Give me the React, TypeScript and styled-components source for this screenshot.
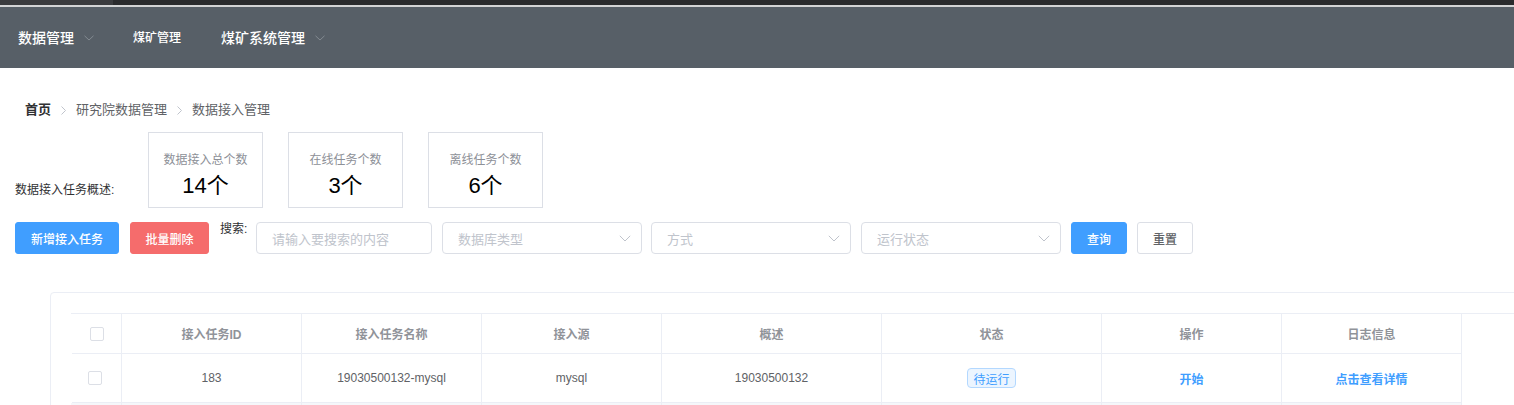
import React from "react";
import styled, { createGlobalStyle } from "styled-components";

const FONT = `"Helvetica Neue", Helvetica, "PingFang SC", "Liberation Sans", "Noto Sans CJK SC", sans-serif`;

const GlobalStyle = createGlobalStyle`
  html, body { margin: 0; padding: 0; overflow: hidden; background: #fff; }
  body { font-family: ${FONT}; color: #606266; }
  * { box-sizing: border-box; }
`;

const Page = styled.div`
  width: 1514px;
  height: 405px;
  overflow: hidden;
`;

const TopStrip = styled.div`
  display: flex;
  height: 5px;
  background: #2a2b2d;
`;

const TopTab = styled.div`
  width: 113px;
  background: #3a3b3e;
`;

const TopLine = styled.div`
  height: 2px;
  background: #d3d4d5;
`;

const NavBar = styled.nav`
  height: 61px;
  background: #575f67;
  display: flex;
  align-items: center;
  padding-left: 18px;
  gap: 40px;
`;

const NavItem = styled.div<{ $small?: boolean }>`
  display: flex;
  align-items: center;
  gap: 10px;
  color: #fff;
  font-size: ${(p) => (p.$small ? "12px" : "14px")};
  font-weight: 500;
  line-height: 20px;
  margin-left: ${(p) => (p.$small ? "-1px" : "0")};
`;

const NavChevron = () => (
  <svg width="10" height="6" viewBox="0 0 10 6">
    <polyline points="0.5,0.8 5,5 9.5,0.8" fill="none" stroke="#838a91" strokeWidth="1" />
  </svg>
);

const Main = styled.main`
  padding-left: 15px;
`;

const Breadcrumb = styled.div`
  margin-top: 34px;
  padding-left: 10px;
  display: flex;
  align-items: center;
  font-size: 13px;
  line-height: 16px;
`;

const Crumb = styled.span<{ $strong?: boolean }>`
  color: ${(p) => (p.$strong ? "#303133" : "#606266")};
  font-weight: ${(p) => (p.$strong ? 700 : 400)};
`;

const CrumbSep = styled.span`
  display: inline-flex;
  margin: 0 10px;
`;

const SepIcon = () => (
  <CrumbSep>
    <svg width="5" height="9" viewBox="0 0 5 9">
      <polyline points="0.5,0.5 4.5,4.5 0.5,8.5" fill="none" stroke="#c0c4cc" strokeWidth="1" />
    </svg>
  </CrumbSep>
);

const StatsRow = styled.section`
  margin-top: 14px;
  display: flex;
  align-items: flex-end;
`;

const StatsLabel = styled.div`
  width: 133px;
  font-size: 12px;
  line-height: 16px;
  color: #303133;
  margin-bottom: 10px;
`;

const StatBoxes = styled.div`
  display: flex;
  gap: 25px;
`;

const StatBox = styled.div`
  width: 115px;
  height: 76px;
  border: 1px solid #dcdfe6;
  display: flex;
  flex-direction: column;
  align-items: center;
  padding-top: 19px;
`;

const StatTitle = styled.div`
  font-size: 12px;
  line-height: 16px;
  color: #8d9097;
`;

const StatValue = styled.div`
  margin-top: 4px;
  font-size: 22px;
  line-height: 28px;
  color: #000;
`;

const Toolbar = styled.section`
  margin-top: 14px;
  height: 32px;
  display: flex;
  align-items: center;
`;

const Button = styled.button<{ $variant: "primary" | "danger" | "plain"; $w: number; $ml?: number }>`
  width: ${(p) => p.$w}px;
  height: 32px;
  margin-left: ${(p) => p.$ml ?? 0}px;
  padding: 0;
  border-radius: 3px;
  font-family: ${FONT};
  font-size: 12px;
  font-weight: 500;
  cursor: pointer;
  border: 1px solid
    ${(p) => (p.$variant === "primary" ? "#409eff" : p.$variant === "danger" ? "#f56c6c" : "#dcdfe6")};
  background: ${(p) => (p.$variant === "primary" ? "#409eff" : p.$variant === "danger" ? "#f56c6c" : "#fff")};
  color: ${(p) => (p.$variant === "plain" ? "#606266" : "#fff")};
`;

const SearchLabel = styled.label`
  align-self: flex-start;
  margin-left: 11px;
  width: 36px;
  font-size: 12px;
  line-height: 14px;
  color: #303133;
`;

const Field = styled.div<{ $w: number; $ml?: number }>`
  width: ${(p) => p.$w}px;
  height: 32px;
  margin-left: ${(p) => p.$ml ?? 0}px;
  border: 1px solid #dcdfe6;
  border-radius: 4px;
  display: flex;
  align-items: center;
  justify-content: space-between;
  padding: 0 10px 0 15px;
  font-size: 13px;
  color: #c0c4cc;
`;

const SelectChevron = () => (
  <svg width="12" height="7" viewBox="0 0 12 7">
    <polyline points="0.8,0.8 6,6 11.2,0.8" fill="none" stroke="#c0c4cc" strokeWidth="1" />
  </svg>
);

const Card = styled.section`
  margin-top: 38px;
  margin-left: 35px;
  width: 1520px;
  border: 1px solid #ebeef5;
  border-radius: 4px 0 0 0;
  padding: 20px;
  background: #fff;
`;

const TableWrap = styled.div`
  border-top: 1px solid #ebeef5;
  border-left: 1px solid #ebeef5;
`;

const COLS = "50px 180px 180px 180px 220px 220px 180px 180px";

const Row = styled.div<{ $head?: boolean; $striped?: boolean }>`
  display: grid;
  grid-template-columns: ${COLS};
  width: 1390px;
  height: ${(p) => (p.$head ? 40 : 49)}px;
  margin-left: -1px;
  padding-left: 1px;
  background: ${(p) => (p.$striped ? "#f5f7fa" : "#fff")};
  font-size: 12px;
  color: ${(p) => (p.$head ? "#909399" : "#606266")};
  font-weight: ${(p) => (p.$head ? 700 : 400)};
`;

const Cell = styled.div<{ $offset?: number }>`
  display: flex;
  align-items: center;
  justify-content: center;
  border-right: 1px solid #ebeef5;
  border-bottom: 1px solid #ebeef5;
  padding-right: ${(p) => p.$offset ?? 0}px;
`;

const Checkbox = styled.span`
  width: 14px;
  height: 14px;
  border: 1px solid #dcdfe6;
  border-radius: 2px;
  background: #fff;
`;

const Tag = styled.span`
  height: 20px;
  padding: 0 5px;
  display: inline-flex;
  align-items: center;
  border: 1px solid #b3d8ff;
  background: #ecf5ff;
  color: #409eff;
  border-radius: 4px;
  font-size: 12px;
`;

const Link = styled.a`
  color: #409eff;
  font-weight: 700;
  text-decoration: none;
  cursor: pointer;
`;

const heads = ["接入任务ID", "接入任务名称", "接入源", "概述", "状态", "操作", "日志信息"];

const rows = [
  { id: "183", name: "19030500132-mysql", src: "mysql", desc: "19030500132", status: "待运行" },
];

export default function App() {
  return (
    <Page>
      <GlobalStyle />
      <TopStrip>
        <TopTab />
      </TopStrip>
      <TopLine />
      <NavBar>
        <NavItem>
          数据管理
          <NavChevron />
        </NavItem>
        <NavItem $small>煤矿管理</NavItem>
        <NavItem>
          煤矿系统管理
          <NavChevron />
        </NavItem>
      </NavBar>
      <Main>
        <Breadcrumb>
          <Crumb $strong>首页</Crumb>
          <SepIcon />
          <Crumb>研究院数据管理</Crumb>
          <SepIcon />
          <Crumb>数据接入管理</Crumb>
        </Breadcrumb>
        <StatsRow>
          <StatsLabel>数据接入任务概述:</StatsLabel>
          <StatBoxes>
            <StatBox>
              <StatTitle>数据接入总个数</StatTitle>
              <StatValue>14个</StatValue>
            </StatBox>
            <StatBox>
              <StatTitle>在线任务个数</StatTitle>
              <StatValue>3个</StatValue>
            </StatBox>
            <StatBox>
              <StatTitle>离线任务个数</StatTitle>
              <StatValue>6个</StatValue>
            </StatBox>
          </StatBoxes>
        </StatsRow>
        <Toolbar>
          <Button $variant="primary" $w={104}>新增接入任务</Button>
          <Button $variant="danger" $w={79} $ml={11}>批量删除</Button>
          <SearchLabel>搜索:</SearchLabel>
          <Field $w={176}>请输入要搜索的内容</Field>
          <Field $w={200} $ml={10}>
            数据库类型
            <SelectChevron />
          </Field>
          <Field $w={200} $ml={9}>
            方式
            <SelectChevron />
          </Field>
          <Field $w={200} $ml={10}>
            运行状态
            <SelectChevron />
          </Field>
          <Button $variant="primary" $w={56} $ml={10}>查询</Button>
          <Button $variant="plain" $w={56} $ml={10}>重置</Button>
        </Toolbar>
        <Card>
          <TableWrap>
            <Row $head>
              <Cell $offset={-3}>
                <Checkbox />
              </Cell>
              {heads.map((h) => (
                <Cell key={h}>{h}</Cell>
              ))}
            </Row>
            {rows.map((r) => (
              <Row key={r.id}>
                <Cell $offset={4}>
                  <Checkbox />
                </Cell>
                <Cell>{r.id}</Cell>
                <Cell>{r.name}</Cell>
                <Cell>{r.src}</Cell>
                <Cell>{r.desc}</Cell>
                <Cell>
                  <Tag>{r.status}</Tag>
                </Cell>
                <Cell>
                  <Link>开始</Link>
                </Cell>
                <Cell>
                  <Link>点击查看详情</Link>
                </Cell>
              </Row>
            ))}
            <Row $striped>
              {Array.from({ length: 8 }).map((_, i) => (
                <Cell key={i} />
              ))}
            </Row>
          </TableWrap>
        </Card>
      </Main>
    </Page>
  );
}
